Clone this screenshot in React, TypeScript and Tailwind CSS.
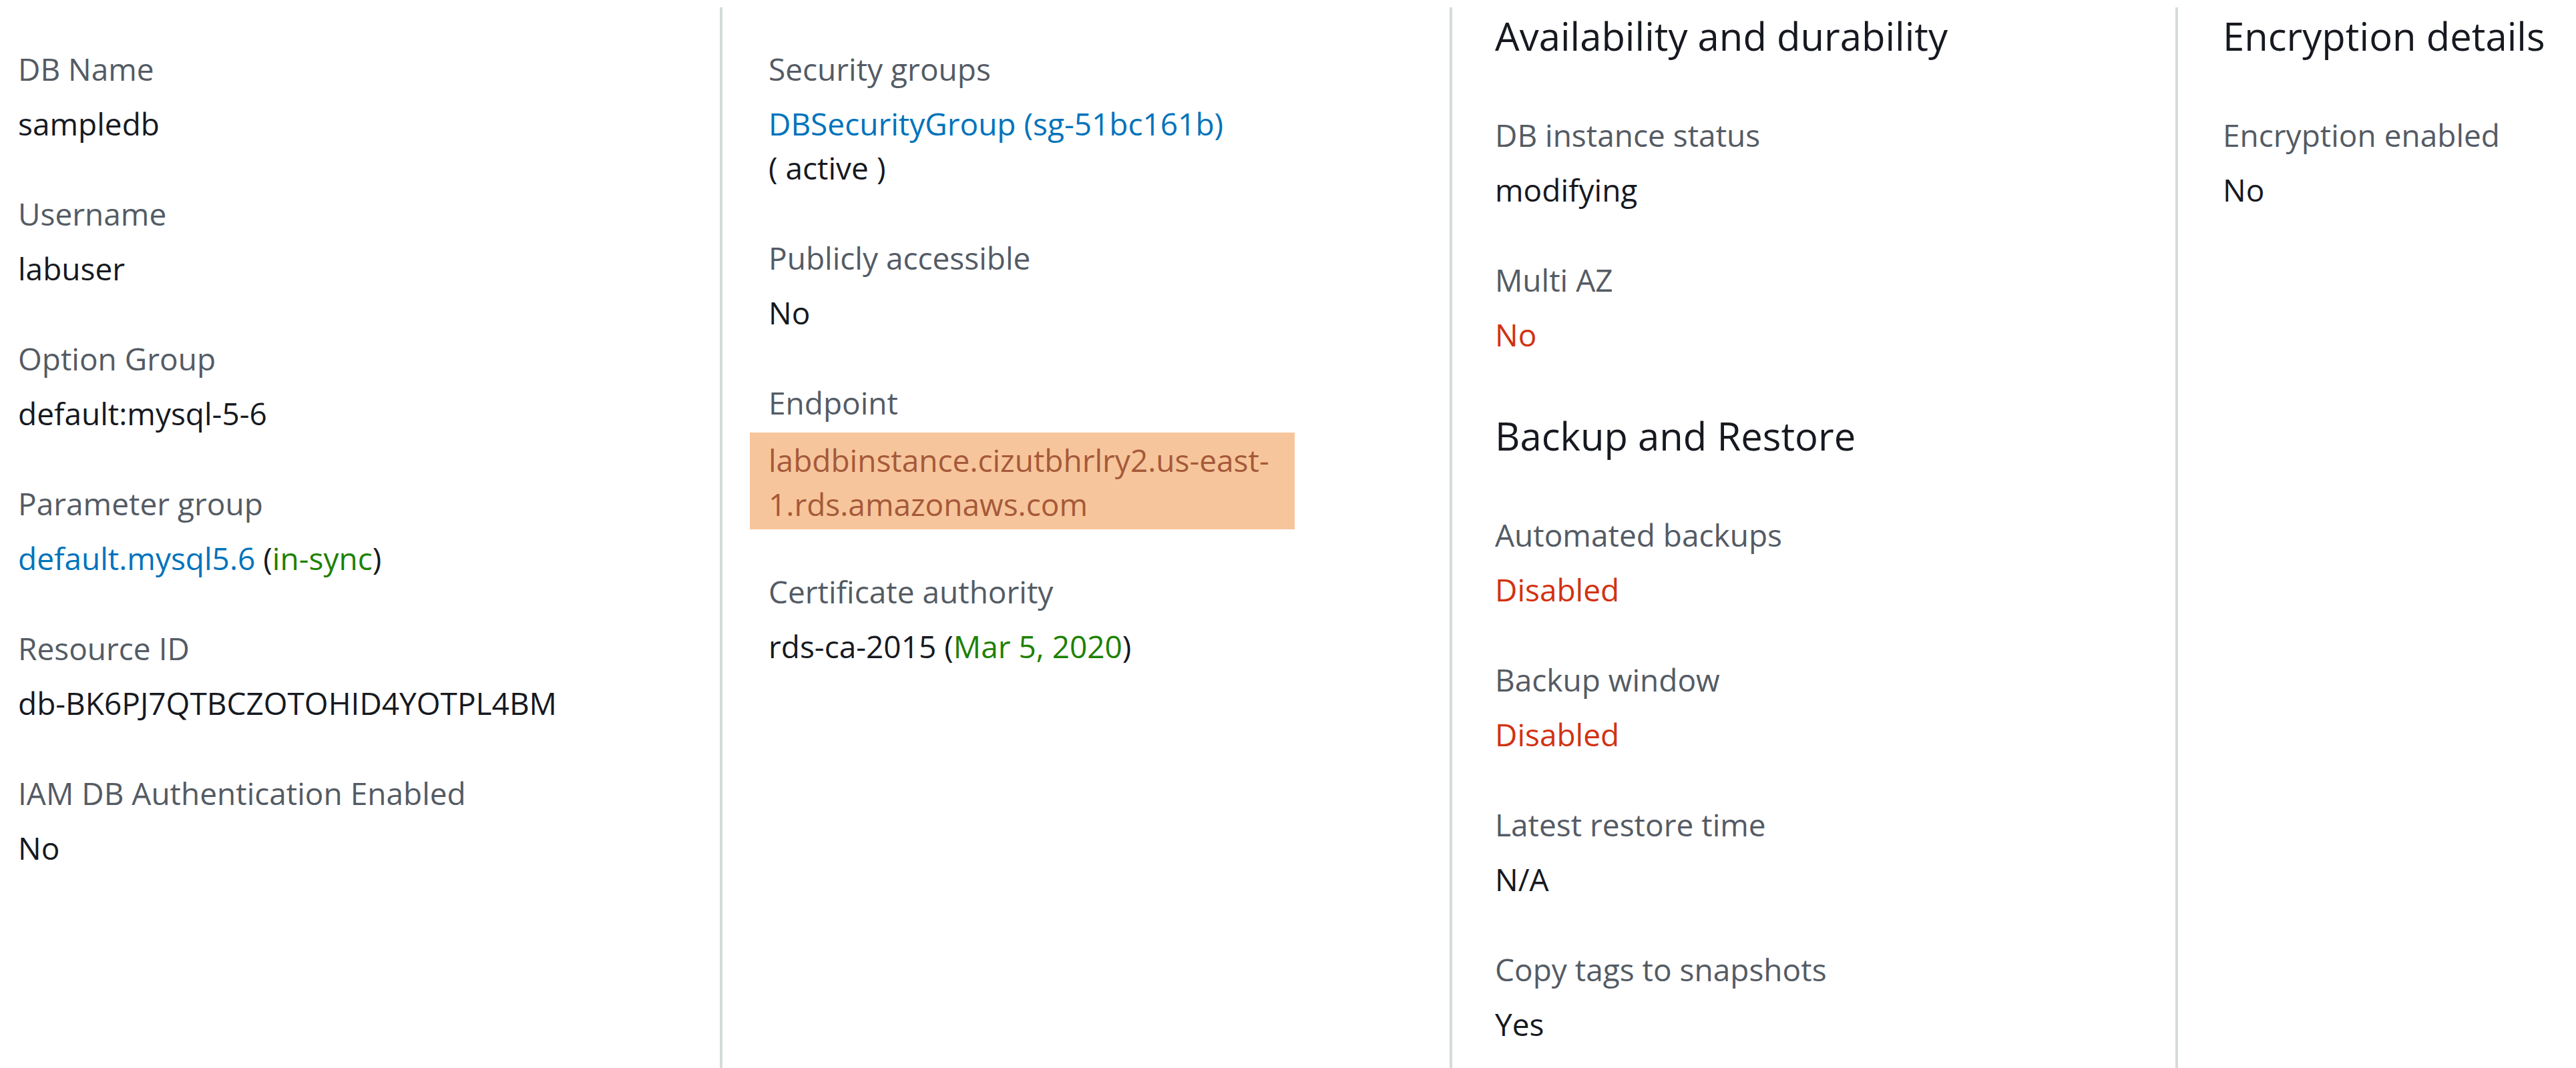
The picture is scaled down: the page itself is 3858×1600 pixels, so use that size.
import React from "react";

type Field = { label: string; value: React.ReactNode };

function Item({ label, value, first }: Field & { first?: boolean }) {
  return (
    <div className={first ? "" : "mt-[69px]"}>
      <div className="text-[#545b64] leading-[66px]">{label}</div>
      <div className="mt-4 text-[#16191f] leading-[66px]">{value}</div>
    </div>
  );
}

function Heading({ children }: { children: React.ReactNode }) {
  return <h2 className="text-[58px] leading-[72px] text-[#16191f]">{children}</h2>;
}

const green = "text-[#1d8102]";
const blue = "text-[#0073bb]";
const red = "text-[#d13212]";

export default function App() {
  return (
    <div
      className="w-[3858px] h-[1600px] bg-white overflow-hidden pt-[11px] text-[46px]"
      style={{ fontFamily: '"Open Sans", "Noto Sans", sans-serif' }}
    >
      <div className="flex h-full">
        {/* column 1 */}
        <div className="w-[1078px] shrink-0 pl-[27px] pt-[59px]">
          <Item first label="DB Name" value="sampledb" />
          <Item label="Username" value="labuser" />
          <Item label="Option Group" value="default:mysql-5-6" />
          <Item
            label="Parameter group"
            value={
              <>
                <span className={blue}>default.mysql5.6</span> (<span className={green}>in-sync</span>)
              </>
            }
          />
          <Item label="Resource ID" value="db-BK6PJ7QTBCZOTOHID4YOTPL4BM" />
          <Item label="IAM DB Authentication Enabled" value="No" />
        </div>

        {/* column 2 */}
        <div className="w-[1093px] shrink-0 border-l-4 border-[#d5dbdb] pl-[69px] pt-[59px]">
          <Item
            first
            label="Security groups"
            value={
              <>
                <div className={blue}>DBSecurityGroup (sg-51bc161b)</div>
                <div>( active )</div>
              </>
            }
          />
          <Item label="Publicly accessible" value="No" />
          <div className="mt-[69px]">
            <div className="text-[#545b64] leading-[66px]">Endpoint</div>
            <div className="mt-3 -ml-[28px] w-[816px] bg-[#f7c59b] pl-[28px] pt-2 pb-[5px] leading-[66px] text-[#a5593a]">
              <div>labdbinstance.cizutbhrlry2.us-east-</div>
              <div>1.rds.amazonaws.com</div>
            </div>
          </div>
          <div className="mt-[60px]">
            <div className="text-[#545b64] leading-[66px]">Certificate authority</div>
            <div className="mt-4 text-[#16191f] leading-[66px]">
              rds-ca-2015 (<span className={green}>Mar 5, 2020</span>)
            </div>
          </div>
        </div>

        {/* column 3 */}
        <div className="w-[1087px] shrink-0 border-l-4 border-[#d5dbdb] pl-[64px] pt-[7px]">
          <Heading>Availability and durability</Heading>
          <div className="mt-[79px]">
            <Item first label="DB instance status" value="modifying" />
            <Item label="Multi AZ" value={<span className={red}>No</span>} />
          </div>
          <div className="mt-[83px]">
            <Heading>Backup and Restore</Heading>
          </div>
          <div className="mt-[79px]">
            <Item first label="Automated backups" value={<span className={red}>Disabled</span>} />
            <Item label="Backup window" value={<span className={red}>Disabled</span>} />
            <Item label="Latest restore time" value="N/A" />
            <Item label="Copy tags to snapshots" value="Yes" />
          </div>
        </div>

        {/* column 4 */}
        <div className="flex-1 border-l-4 border-[#d5dbdb] pl-[67px] pt-[7px] whitespace-nowrap">
          <Heading>Encryption details</Heading>
          <div className="mt-[79px]">
            <Item first label="Encryption enabled" value="No" />
          </div>
        </div>
      </div>
    </div>
  );
}
